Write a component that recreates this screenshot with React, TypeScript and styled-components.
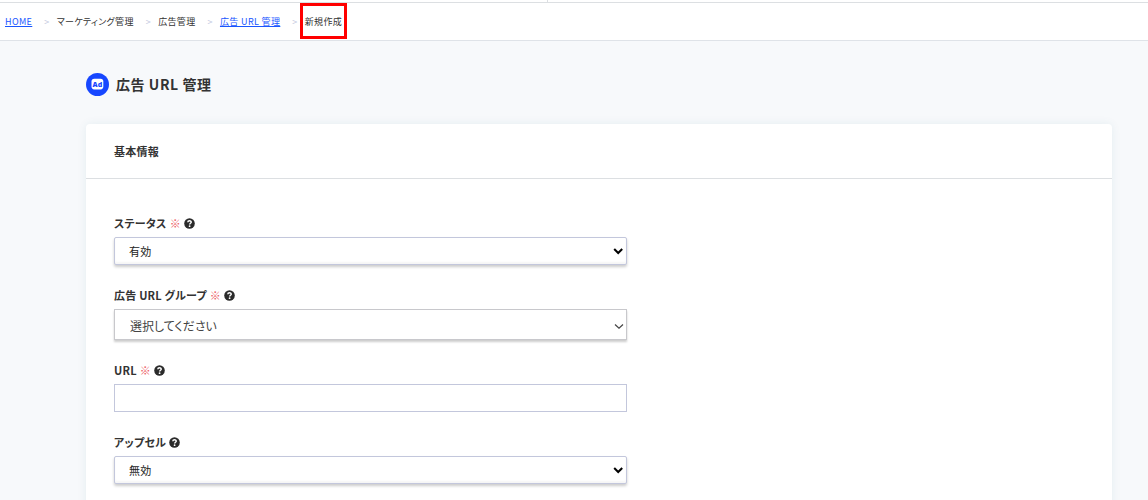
import React from 'react';
import styled, { createGlobalStyle, css } from 'styled-components';

const GlobalStyle = createGlobalStyle`
  *, *::before, *::after { box-sizing: border-box; }
  body {
    margin: 0;
    background: #f7f9fb;
    color: #333;
    font-family: "Noto Sans CJK JP", "Noto Sans", sans-serif;
    font-size: 11px;
    font-feature-settings: "palt";
    overflow: hidden;
  }
  button, input, select { font: inherit; color: inherit; font-feature-settings: inherit; }
`;

const HeaderEdge = styled.div`
  display: grid;
  grid-template-columns: 547px 1fr;
  height: 3px;
  background: #fff;
  border-bottom: 1px solid #dcdfe2;
`;

const HeaderCell = styled.div`
  & + & { border-left: 1px solid #dcdfe2; }
`;

const Breadcrumb = styled.nav`
  background: #fff;
  border-bottom: 1px solid #dfe3e8;
`;

const CrumbList = styled.ol`
  display: flex;
  align-items: center;
  height: 37px;
  margin: 0;
  padding: 0 5px;
  list-style: none;
  font-size: 9px;
  letter-spacing: 0.04em;
  white-space: nowrap;
`;

const Crumb = styled.li`
  position: relative;
  display: flex;
  align-items: center;
  & + &::before {
    content: ">";
    color: #c3c8e0;
    margin: 0 7px 0 12px;
  }
`;

const CrumbLink = styled.a`
  color: #1a56ff;
  text-decoration: underline;
`;

const Highlight = styled.span`
  position: absolute;
  top: -12px;
  bottom: -11px;
  right: -5px;
  width: 47px;
  border: 3px solid #f00;
  pointer-events: none;
`;

const Main = styled.main`
  padding: 31px 36px 0 86px;
`;

const PageHead = styled.header`
  display: flex;
  align-items: center;
  gap: 7px;
  height: 24px;
  margin-bottom: 28px;
`;

const Title = styled.h1`
  margin: 0;
  font-size: 14px;
  line-height: 24px;
  font-weight: 700;
  letter-spacing: 0.04em;
`;

const Card = styled.section`
  background: #fff;
  border-radius: 4px;
  box-shadow: 0 0 10px rgba(30, 100, 130, 0.08);
`;

const CardTitle = styled.h2`
  margin: 0;
  padding: 0 28px;
  border-bottom: 1px solid #dcdfe2;
  font-size: 11px;
  line-height: 54px;
  font-weight: 700;
  letter-spacing: 0.02em;
`;

const Form = styled.form`
  display: grid;
  gap: 21px;
  padding: 35px 28px;
`;

const Field = styled.div`
  max-width: 513px;
`;

const LabelRow = styled.div`
  display: flex;
  align-items: center;
  height: 18px;
  margin-bottom: 5px;
`;

const Label = styled.label`
  font-weight: 700;
  line-height: 18px;
  letter-spacing: 0.02em;
`;

const Required = styled.span`
  margin-left: 3px;
  color: #ec5a66;
  font-weight: 400;
`;

const HelpButton = styled.button`
  display: flex;
  margin-left: 3px;
  padding: 0;
  border: 0;
  background: none;
`;

const control = css`
  display: block;
  width: 100%;
  height: 28px;
  border: 1px solid #c3c7dc;
  border-radius: 0;
  background: #fff;
  letter-spacing: 0.02em;
`;

const SelectWrap = styled.div`
  position: relative;
`;

const Select = styled.select<{ $plain?: boolean }>`
  ${control}
  appearance: none;
  padding: 0 24px 0 14px;
  border-radius: 2px;
  color: #222;
  box-shadow: 0 2px 3px rgba(0, 0, 0, 0.2), inset 0 -2px 2px rgba(0, 0, 0, 0.04);
  ${({ $plain }) =>
    $plain &&
    css`
      height: 31px;
      padding: 2px 24px 0 15px;
      border-color: #c8c8cc;
      border-radius: 0;
      font-size: 12px;
      color: #444;
      letter-spacing: normal;
      box-shadow: 0 2px 2px rgba(0, 0, 0, 0.2);
    `}
`;

const Chevron = styled.svg`
  position: absolute;
  top: 0;
  bottom: 0;
  right: 3px;
  margin: auto 0;
  pointer-events: none;
`;

const TextInput = styled.input`
  ${control}
  padding: 0 14px;
`;

const AdMark = styled.text`
  font-family: "Open Sans", "Noto Sans", sans-serif;
  font-size: 7px;
  font-weight: 800;
`;

const AdIcon = () => (
  <svg width="23" height="23" viewBox="0 0 23 23" aria-hidden="true">
    <circle cx="11.5" cy="11.5" r="11.5" fill="#1747ff" />
    <rect x="5.5" y="5.8" width="11.8" height="10.6" rx="2.8" fill="#fff" />
    <AdMark x="11.4" y="13.6" textAnchor="middle" fill="#1747ff">Ad</AdMark>
  </svg>
);

const HelpIcon = () => (
  <svg width="11" height="11" viewBox="0 0 11 11" aria-hidden="true">
    <circle cx="5.5" cy="5.5" r="5.3" fill="#2b2b2b" />
    <path
      d="M3.8 4.2 C3.9 2.4 7.2 2.3 7.2 4.2 C7.2 5.3 5.6 5.2 5.6 6.6"
      fill="none"
      stroke="#fff"
      strokeWidth="1.5"
    />
    <circle cx="5.6" cy="8.2" r="0.9" fill="#fff" />
  </svg>
);

interface FieldHeadProps {
  id: string;
  text: string;
  required?: boolean;
}

const FieldHead = ({ id, text, required }: FieldHeadProps) => (
  <LabelRow>
    <Label htmlFor={id}>
      {text}
      {required && <Required>※</Required>}
    </Label>
    <HelpButton type="button" aria-label={`${text}のヘルプ`}>
      <HelpIcon />
    </HelpButton>
  </LabelRow>
);

interface SelectFieldProps extends FieldHeadProps {
  options: string[];
  plain?: boolean;
}

const SelectField = ({ options, plain, ...head }: SelectFieldProps) => (
  <Field>
    <FieldHead {...head} />
    <SelectWrap>
      <Select id={head.id} $plain={plain}>
        {options.map((option) => (
          <option key={option}>{option}</option>
        ))}
      </Select>
      <Chevron width="11" height="8" viewBox="0 0 11 8" aria-hidden="true">
        <path
          d={plain ? 'M2 3.5 L6 7.2 L10 3.5' : 'M1.2 2 L5.2 6 L9.2 2'}
          fill="none"
          stroke={plain ? '#444' : '#000'}
          strokeWidth={plain ? 1.2 : 2}
        />
      </Chevron>
    </SelectWrap>
  </Field>
);

export default function App() {
  return (
    <>
      <GlobalStyle />
      <HeaderEdge>
        <HeaderCell />
        <HeaderCell />
      </HeaderEdge>
      <Breadcrumb aria-label="パンくずリスト">
        <CrumbList>
          <Crumb><CrumbLink href="#home">HOME</CrumbLink></Crumb>
          <Crumb>マーケティング管理</Crumb>
          <Crumb>広告管理</Crumb>
          <Crumb><CrumbLink href="#ad-url">広告 URL 管理</CrumbLink></Crumb>
          <Crumb aria-current="page">
            新規作成
            <Highlight />
          </Crumb>
        </CrumbList>
      </Breadcrumb>
      <Main>
        <PageHead>
          <AdIcon />
          <Title>広告 URL 管理</Title>
        </PageHead>
        <Card>
          <CardTitle>基本情報</CardTitle>
          <Form>
            <SelectField id="status" text="ステータス" required options={['有効', '無効']} />
            <SelectField id="group" text="広告 URL グループ" required plain options={['選択してください']} />
            <Field>
              <FieldHead id="url" text="URL" required />
              <TextInput id="url" type="text" />
            </Field>
            <SelectField id="upsell" text="アップセル" options={['無効', '有効']} />
          </Form>
        </Card>
      </Main>
    </>
  );
}
